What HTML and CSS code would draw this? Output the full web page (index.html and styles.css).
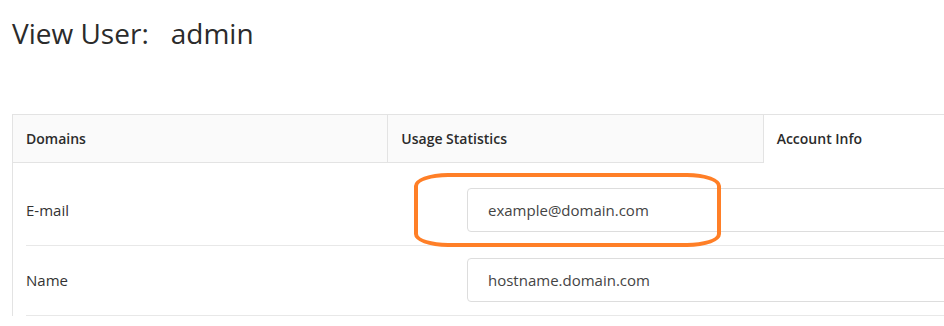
FILE: index.html
```html
<!DOCTYPE html>
<html lang="en">
<head>
  <meta charset="UTF-8">
  <title>View User: admin</title>
  <link rel="stylesheet" href="styles.css">
</head>
<body>
  <div class="page">
    <h1 class="page-title"><span>View User:</span><span class="user-name">admin</span></h1>

    <div class="panel">
      <div class="tabs">
        <div class="tab">Domains</div>
        <div class="tab">Usage Statistics</div>
        <div class="tab active">Account Info</div>
      </div>

      <form class="info-form">
        <div class="form-row">
          <label for="email">E-mail</label>
          <input type="text" id="email" value="example@domain.com" readonly />
          <div class="highlight"></div>
        </div>
        <div class="form-row">
          <label for="name">Name</label>
          <input type="text" id="name" value="hostname.domain.com" readonly />
        </div>
      </form>
    </div>
  </div>
</body>
</html>
```

FILE: styles.css
```css
body { margin: 0; font-family: "Open Sans", "Liberation Sans", sans-serif; color: #333; background: #fff; }
.page { padding: 0 0 0 12px; overflow: hidden; }
.page-title { margin: 14px 0 62px; font-size: 28px; line-height: 38px; font-weight: 500; color: #2b2b2b; white-space: nowrap; }
.page-title .user-name { margin-left: 22px; }

.panel { width: 1125px; border: 1px solid #e3e3e3; border-bottom: none; }
.tabs { display: flex; }
.tab { flex: 1; padding: 14px 13px 13px; font-size: 14px; line-height: 20px; font-weight: 600; color: #2b2b2b; background: #fafafa; border-bottom: 1px solid #e3e3e3; border-right: 1px solid #e3e3e3; }
.tab.active { background: #fff; border-bottom-color: transparent; border-right: none; }

.info-form { padding-top: 13px; }
.form-row { position: relative; display: flex; align-items: center; margin: 0 13px; padding: 12px 0 13px; border-bottom: 1px solid #e8e8e8; }
.form-row label { width: 441px; flex: none; font-size: 15px; line-height: 22px; color: #333; }
.form-row input { flex: 1; box-sizing: border-box; height: 44px; padding: 0 20px; border: 1px solid #ddd; border-radius: 4px; font-family: inherit; font-size: 15px; color: #444; background: #fff; outline: none; }

/* annotation drawn over the e-mail field */
.highlight { position: absolute; left: 388px; top: -3px; width: 307px; height: 74px; box-sizing: border-box; border: 4px solid #ff7f27; border-radius: 34px / 13px; pointer-events: none; }
```
